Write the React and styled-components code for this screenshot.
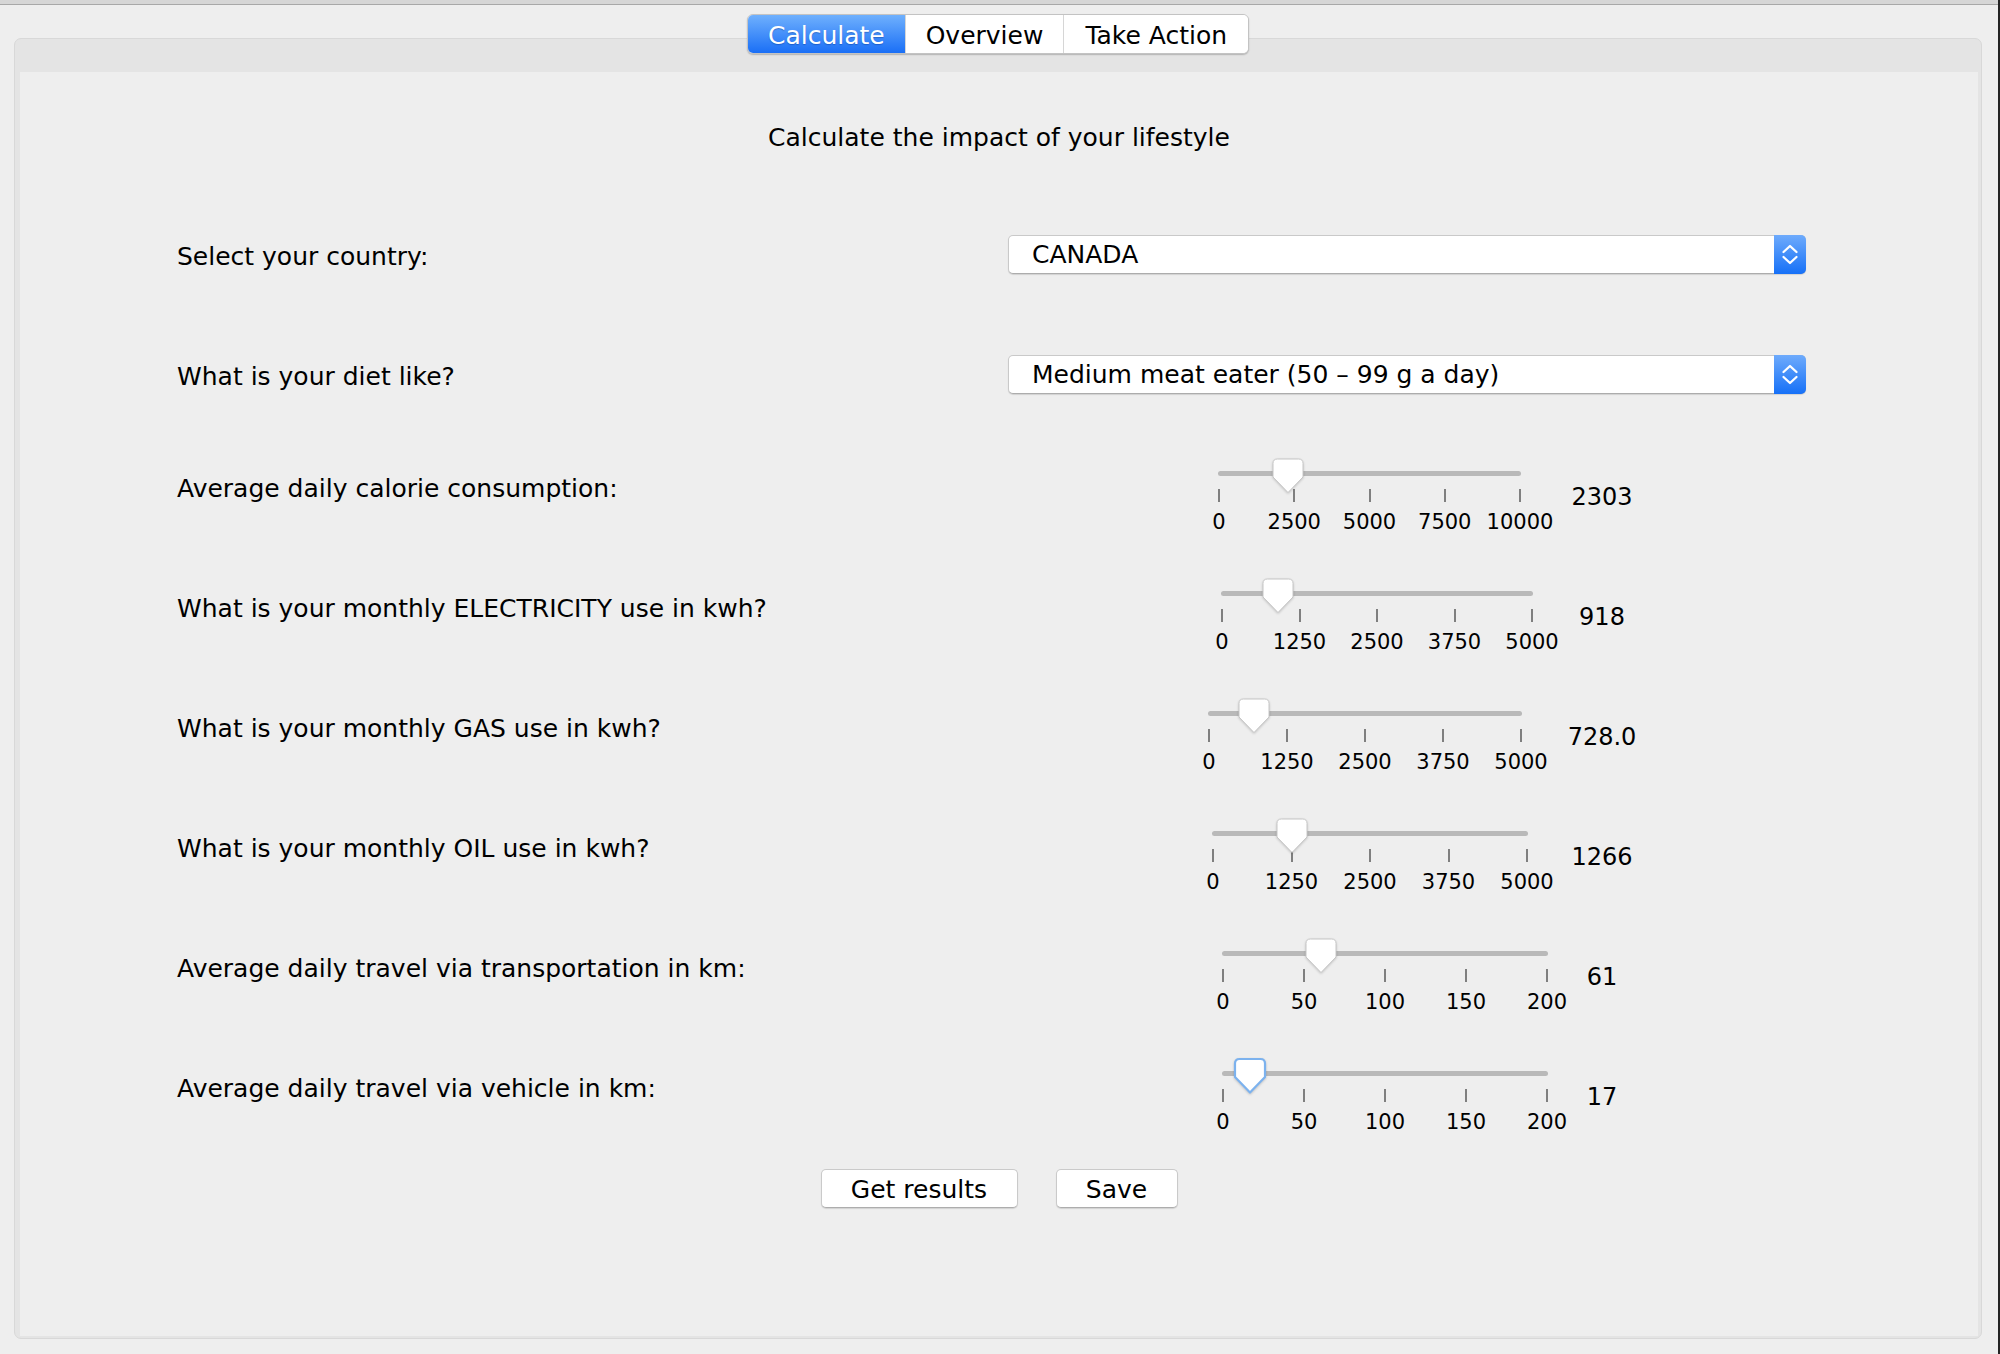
import React from "react";
import styled, { createGlobalStyle } from "styled-components";

const GlobalStyle = createGlobalStyle`
  html, body { margin: 0; padding: 0; background: #eeeeee; }
  body { font-family: "DejaVu Sans", "Liberation Sans", sans-serif; color: #000; }
  * { box-sizing: border-box; }
`;

const Window = styled.div`
  width: 2000px;
  height: 1354px;
  display: flex;
  flex-direction: column;
  background: #eeeeee;
  border-right: 2px solid #232323;
  overflow: hidden;
`;

const TopStrip = styled.div`
  height: 5px;
  flex: none;
  background: #d6d6d6;
  border-bottom: 1px solid #a8a8a8;
`;

const TabBar = styled.div`
  position: relative;
  z-index: 2;
  align-self: center;
  display: flex;
  height: 40px;
  margin-top: 9px;
  margin-left: -2px;
  border: 1px solid #c3c3c3;
  border-radius: 6px;
  background: #fff;
  box-shadow: 0 1px 1.5px rgba(0, 0, 0, 0.22);
  overflow: hidden;
`;

const Tab = styled.div`
  display: flex;
  align-items: center;
  justify-content: center;
  padding: 2px ${(p) => p.$pad}px 0;
  font-size: 25px;
  line-height: 1;
  color: ${(p) => (p.$active ? "#fff" : "#000")};
  background: ${(p) =>
    p.$active ? "linear-gradient(#6fb0fd, #1a6ff6)" : "#ffffff"};
  text-shadow: ${(p) => (p.$active ? "0 1px 1px rgba(0,40,120,0.35)" : "none")};
  & + & {
    border-left: 1px solid ${(p) => (p.$active ? "transparent" : "#d6d6d6")};
  }
`;

const Panel = styled.div`
  margin: -16px 16px 0 14px;
  height: 1301px;
  background: #e4e4e4;
  border: 1px solid #d8d8d8;
  border-radius: 7px;
  padding: 33px 3px 2px 5px;
`;

const Content = styled.div`
  height: 1264px;
  background: #eeeeee;
  display: flex;
  flex-direction: column;
`;

const Heading = styled.div`
  padding-top: 51px;
  height: 79px;
  line-height: 30px;
  font-size: 25px;
  text-align: center;
  margin-bottom: 44px;
`;

const ComboRow = styled.div`
  display: grid;
  grid-template-columns: 988px 798px;
  align-items: center;
  height: 120px;
`;

const Label = styled.div`
  padding-left: 157px;
  font-size: 25px;
  line-height: 30px;
  white-space: nowrap;
`;

const ComboLabel = styled(Label)`
  padding-top: 4px;
`;

const Combo = styled.div`
  display: flex;
  height: 39px;
  margin-top: -2px;
  background: #fff;
  border: 1px solid #c9c9c9;
  border-bottom-color: #acacac;
  border-radius: 5px;
  box-shadow: 0 1px 1px rgba(0, 0, 0, 0.12);
`;

const ComboText = styled.div`
  flex: 1;
  display: flex;
  align-items: center;
  padding: 1px 0 0 23px;
  font-size: 25px;
  white-space: nowrap;
`;

const ComboArrow = styled.div`
  width: 32px;
  margin: -1px -1px -1px 0;
  border-radius: 0 5px 5px 0;
  background: linear-gradient(#6eabfc, #1670f7);
  display: flex;
  align-items: center;
  justify-content: center;
`;

const SliderList = styled.div`
  display: flex;
  flex-direction: column;
  margin-top: -8px;
`;

const SliderRow = styled.div`
  display: grid;
  grid-template-columns: 1160px 380px 84px;
  height: 120px;
`;

const SliderLabel = styled(Label)`
  padding-top: 47px;
`;

const SliderBox = styled.div`
  position: relative;
  width: ${(p) => p.$width}px;
  margin-left: ${(p) => p.$offset}px;
  padding-top: 44px;
`;

const Track = styled.div`
  height: 5px;
  border-radius: 3px;
  background: #b9b9b9;
`;

const TickScale = styled.div`
  display: flex;
  justify-content: space-between;
  margin-top: 13px;
  padding: 0 1px;
`;

const Tick = styled.div`
  width: 0;
  display: flex;
  flex-direction: column;
  align-items: center;
`;

const TickMark = styled.div`
  width: 2px;
  height: 13px;
  flex: none;
  background: #7f7f7f;
`;

const TickLabel = styled.div`
  margin-top: 8px;
  font-size: 21px;
  line-height: 24px;
  white-space: nowrap;
`;

const Thumb = styled.svg`
  position: absolute;
  top: 31px;
  width: 32px;
  height: 36px;
  overflow: visible;
  filter: drop-shadow(0 1px 1px rgba(0, 0, 0, 0.18));
`;

const Value = styled.div`
  padding-top: 56px;
  font-size: 24px;
  line-height: 28px;
  text-align: center;
  white-space: nowrap;
`;

const ButtonRow = styled.div`
  display: flex;
  justify-content: center;
  gap: 38px;
  margin-top: 22px;
`;

const Button = styled.div`
  width: ${(p) => p.$width}px;
  height: 39px;
  display: flex;
  align-items: center;
  justify-content: center;
  padding-top: 2px;
  background: #fff;
  border: 1px solid #cacaca;
  border-bottom-color: #adadad;
  border-radius: 5px;
  box-shadow: 0 1px 1px rgba(0, 0, 0, 0.12);
  font-size: 25px;
`;

const sliders = [
  { label: "Average daily calorie consumption:", max: 10000, ticks: [0, 2500, 5000, 7500, 10000], value: 2303, display: "2303", offset: 38, width: 303 },
  { label: "What is your monthly ELECTRICITY use in kwh?", max: 5000, ticks: [0, 1250, 2500, 3750, 5000], value: 918, display: "918", offset: 41, width: 312 },
  { label: "What is your monthly GAS use in kwh?", max: 5000, ticks: [0, 1250, 2500, 3750, 5000], value: 728, display: "728.0", offset: 28, width: 314 },
  { label: "What is your monthly OIL use in kwh?", max: 5000, ticks: [0, 1250, 2500, 3750, 5000], value: 1266, display: "1266", offset: 32, width: 316 },
  { label: "Average daily travel via transportation in km:", max: 200, ticks: [0, 50, 100, 150, 200], value: 61, display: "61", offset: 42, width: 326 },
  { label: "Average daily travel via vehicle in km:", max: 200, ticks: [0, 50, 100, 150, 200], value: 17, display: "17", offset: 42, width: 326, focused: true },
];

function ThumbShape({ left, focused }) {
  return (
    <Thumb viewBox="0 0 32 36" style={{ left: `${left}px` }}>
      <path
        d="M5.5 1 H26.5 Q31 1 31 5.5 V19 L16 34.5 L1 19 V5.5 Q1 1 5.5 1 Z"
        fill="#ffffff"
        stroke={focused ? "#7cb2ee" : "#c6c6c6"}
        strokeWidth={focused ? 2.2 : 1}
        strokeLinejoin="round"
      />
    </Thumb>
  );
}

function Slider({ s }) {
  const left = (s.value / s.max) * s.width - 16;
  return (
    <SliderBox $width={s.width} $offset={s.offset}>
      <Track />
      <TickScale>
        {s.ticks.map((t) => (
          <Tick key={t}>
            <TickMark />
            <TickLabel>{t}</TickLabel>
          </Tick>
        ))}
      </TickScale>
      <ThumbShape left={left} focused={s.focused} />
    </SliderBox>
  );
}

function ComboBox({ text }) {
  return (
    <Combo>
      <ComboText>{text}</ComboText>
      <ComboArrow>
        <svg width="32" height="38" viewBox="0 0 32 38">
          <path d="M9.5 17 L16 11 L22.5 17" fill="none" stroke="#fff" strokeWidth="2.3" strokeLinecap="round" strokeLinejoin="round" />
          <path d="M9.5 22 L16 28 L22.5 22" fill="none" stroke="#fff" strokeWidth="2.3" strokeLinecap="round" strokeLinejoin="round" />
        </svg>
      </ComboArrow>
    </Combo>
  );
}

export default function App() {
  return (
    <>
      <GlobalStyle />
      <Window>
        <TopStrip />
        <TabBar>
          <Tab $active $pad={20}>Calculate</Tab>
          <Tab $pad={20}>Overview</Tab>
          <Tab $pad={21}>Take Action</Tab>
        </TabBar>
        <Panel>
          <Content>
            <Heading>Calculate the impact of your lifestyle</Heading>
            <ComboRow>
              <ComboLabel>Select your country:</ComboLabel>
              <ComboBox text="CANADA" />
            </ComboRow>
            <ComboRow>
              <ComboLabel>What is your diet like?</ComboLabel>
              <ComboBox text="Medium meat eater (50 – 99 g a day)" />
            </ComboRow>
            <SliderList>
              {sliders.map((s) => (
                <SliderRow key={s.label}>
                  <SliderLabel>{s.label}</SliderLabel>
                  <div>
                    <Slider s={s} />
                  </div>
                  <Value>{s.display}</Value>
                </SliderRow>
              ))}
            </SliderList>
            <ButtonRow>
              <Button $width={197}>Get results</Button>
              <Button $width={122}>Save</Button>
            </ButtonRow>
          </Content>
        </Panel>
      </Window>
    </>
  );
}
